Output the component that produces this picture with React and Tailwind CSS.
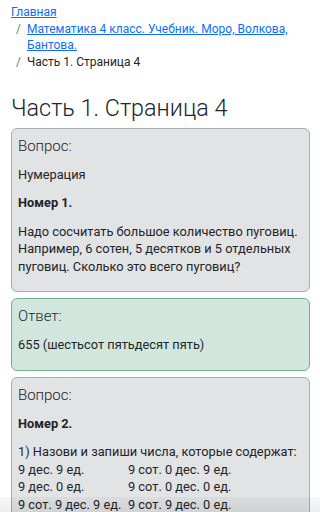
import React from "react";

const font = { fontFamily: "Roboto, 'Noto Sans', sans-serif" };

const Crumb = ({ first, href, children }) => (
  <li className={`flex ${first ? "" : "pl-[5px]"}`}>
    {!first && <span className="pr-[6px] text-[#6c757d]">/</span>}
    {href ? (
      <a href={href} className="text-[#0d6efd] underline">
        {children}
      </a>
    ) : (
      <span className="text-[#212529]">{children}</span>
    )}
  </li>
);

const Card = ({ title, green, children }) => (
  <div
    className={`mb-[6px] rounded-[6px] border px-[6px] pt-[7px] pb-[5px] ${
      green ? "border-[#74b18f] bg-[#d1e7dd]" : "border-[#a9acb0] bg-[#e2e3e5]"
    }`}
  >
    <div className="mb-[10px] text-[15px] font-light leading-[20px] text-[#212529]">{title}</div>
    {children}
  </div>
);

const P = ({ children, bold }) => (
  <p className={`mb-[11px] text-[12.8px] leading-[17.5px] text-[#212529] ${bold ? "font-bold" : ""}`}>{children}</p>
);

export default function App() {
  const rows = [
    ["9 дес. 9 ед.", "9 сот. 0 дес. 9 ед."],
    ["9 дес. 0 ед.", "9 сот. 0 дес. 0 ед."],
    ["9 сот. 9 дес. 9 ед.", "9 сот. 9 дес. 0 ед."],
  ];

  return (
    <div style={font} className="min-h-[512px] bg-white pl-[11px] pr-[10px] pt-[4px]">
      <ol className="flex flex-wrap text-[12px] leading-[16.7px]">
        <Crumb first href="#">Главная</Crumb>
        <Crumb href="#">Математика 4 класс. Учебник. Моро, Волкова, Бантова.</Crumb>
        <Crumb>Часть 1. Страница 4</Crumb>
      </ol>

      <h1 className="mt-[23px] mb-[5px] text-[23.4px] font-light leading-[29px] text-[#212529]">
        Часть 1. Страница 4
      </h1>

      <Card title="Вопрос:">
        <P>Нумерация</P>
        <P bold>Номер 1.</P>
        <P>
          Надо сосчитать большое количество пуговиц. Например, 6 сотен, 5 десятков и 5 отдельных пуговиц. Сколько это
          всего пуговиц?
        </P>
      </Card>

      <Card title="Ответ:" green>
        <P>655 (шестьсот пятьдесят пять)</P>
      </Card>

      <Card title="Вопрос:">
        <P bold>Номер 2.</P>
        <div className="mb-[11px] text-[12.8px] leading-[17.5px] text-[#212529]">
          <div>1) Назови и запиши числа, которые содержат:</div>
          {rows.map((r) => (
            <div key={r[0]} className="grid grid-cols-[110px_1fr]">
              <span>{r[0]}</span>
              <span>{r[1]}</span>
            </div>
          ))}
        </div>
      </Card>

      <div className="fixed bottom-0 left-0 h-[15px] w-full bg-gradient-to-b from-black/[0.03] to-black/[0.07]" />
    </div>
  );
}
